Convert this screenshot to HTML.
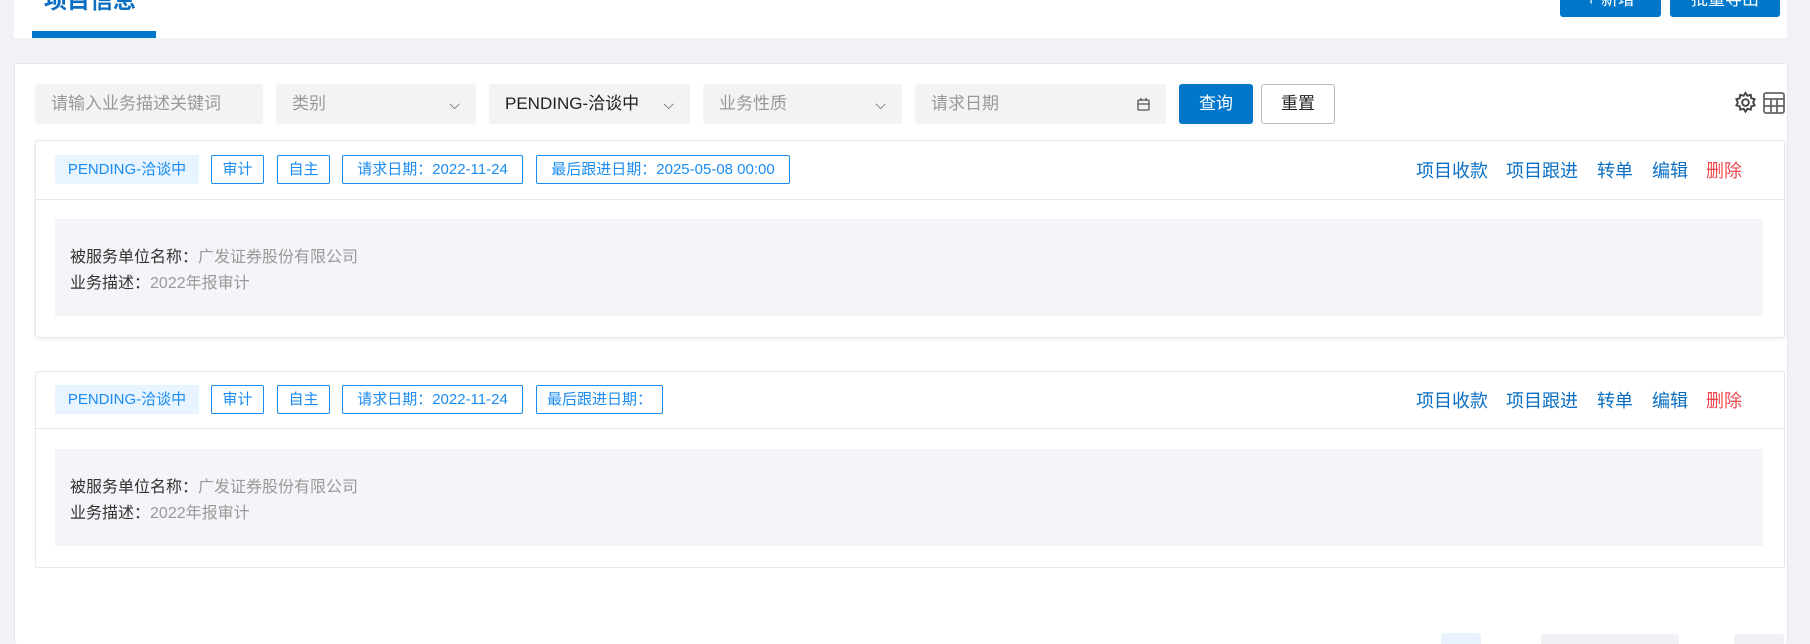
<!DOCTYPE html>
<html style="overflow:hidden;height:644px"><head><meta charset="utf-8"><style>
*{box-sizing:border-box;margin:0;padding:0}
body{width:1810px;height:644px;background:#f0f2f5;font-family:"Liberation Sans","Noto Sans CJK SC",sans-serif;position:relative;overflow:hidden}
.abs{position:absolute}
.hdr{left:14px;top:0;width:1773px;height:38px;background:#fff}
.btn{background:#0177cc;color:#fff;border-radius:3px;font-size:17px;text-align:center}
.main{left:14px;top:63px;width:1774px;height:581px;background:#fff;border:1px solid #e4e7ed;border-bottom:none;border-radius:3px}
.f{top:84px;height:40px;background:#f2f3f5;border-radius:3px;font-size:17px;color:#999;line-height:40px;padding-left:16px}
.f .ch{position:absolute;right:16px;top:0;color:#555;font-size:14px}
.card{left:35px;width:1750px;border:1px solid #e4e7ed;border-radius:3px;background:#fff}
.tag{height:29px;line-height:27px;border:1px solid #1a8cf0;color:#1a8cf0;font-size:15px;text-align:center;border-radius:2px;background:#fff}
.tag.s{border-color:#e8f4ff;background:#e8f4ff}
.act{font-size:18px;color:#0a6fc2}
.body{background:#f4f5f8;font-size:16px;color:#333;line-height:26px;padding-left:15px}
.body span{color:#999}
</style></head><body>
<div class="abs hdr"></div>
<div class="abs" style="left:44px;top:-19px;font-size:23px;font-weight:bold;color:#0a6fc2">项目信息</div>
<div class="abs" style="left:32px;top:31px;width:124px;height:7px;background:#0177cc"></div>
<div class="abs btn" style="left:1560px;top:-8px;width:101px;height:25px;line-height:16px">+ 新增</div>
<div class="abs btn" style="left:1670px;top:-8px;width:110px;height:25px;line-height:16px">批量导出</div>
<div class="abs main"></div>
<div class="abs f" style="left:35px;width:228px">请输入业务描述关键词</div>
<div class="abs f" style="left:276px;width:200px">类别<span class="ch">⌵</span></div>
<div class="abs f" style="left:489px;width:201px;color:#222">PENDING-洽谈中<span class="ch">⌵</span></div>
<div class="abs f" style="left:703px;width:199px">业务性质<span class="ch">⌵</span></div>
<div class="abs f" style="left:915px;width:251px">请求日期
<svg class="abs" style="right:16px;top:14px" width="13" height="13" viewBox="0 0 13 13" fill="none" stroke="#555" stroke-width="1.3"><rect x="1" y="2" width="11" height="10" rx="1"/><path d="M1 6h11M4 0v3M9 0v3"/></svg></div>
<div class="abs btn" style="left:1179px;top:84px;width:74px;height:40px;line-height:40px">查询</div>
<div class="abs" style="left:1261px;top:84px;width:74px;height:40px;line-height:38px;border:1px solid #bbb;border-radius:3px;text-align:center;font-size:17px;color:#222">重置</div>
<svg class="abs" style="left:1734px;top:91px" width="23" height="23" viewBox="0 0 24 24" fill="none" stroke="#444" stroke-width="2"><circle cx="12" cy="12" r="3.5"/><path d="M12 2l2 3 3.5-1 .5 3.5 3.5 1-1.5 3.5 1.5 3-3.5 1-.5 3.5-3.5-1-2 3-2-3-3.5 1-.5-3.5-3.5-1 1.5-3-1.5-3.5 3.5-1 .5-3.5 3.5 1z"/></svg>
<svg class="abs" style="left:1763px;top:92px" width="22" height="22" viewBox="0 0 22 22" fill="none" stroke="#666" stroke-width="1.8"><rect x="1" y="1" width="20" height="20" rx="2"/><path d="M1 7h20M1 14h20M8 7v14M14 7v14"/></svg>

<div class="abs card" style="top:140px;height:198px;box-shadow:0 1px 4px rgba(0,0,0,.08)"></div>
<div class="abs" style="left:36px;top:199px;width:1748px;height:1px;background:#e4e7ed"></div>
<div class="abs tag s" style="left:55px;top:155px;width:144px">PENDING-洽谈中</div>
<div class="abs tag" style="left:211px;top:155px;width:53px">审计</div>
<div class="abs tag" style="left:277px;top:155px;width:53px">自主</div>
<div class="abs tag" style="left:342px;top:155px;width:181px">请求日期：2022-11-24</div>
<div class="abs tag" style="left:536px;top:155px;width:254px">最后跟进日期：2025-05-08 00:00</div>
<div class="abs act" style="left:1416px;top:157px">项目收款</div>
<div class="abs act" style="left:1506px;top:157px">项目跟进</div>
<div class="abs act" style="left:1597px;top:157px">转单</div>
<div class="abs act" style="left:1652px;top:157px">编辑</div>
<div class="abs act" style="left:1706px;top:157px;color:#f0454a">删除</div>
<div class="abs body" style="left:55px;top:219px;width:1708px;height:97px;padding-top:26px">被服务单位名称：<span>广发证券股份有限公司</span><br>业务描述：<span>2022年报审计</span></div>

<div class="abs card" style="top:371px;height:197px"></div>
<div class="abs" style="left:36px;top:428px;width:1748px;height:1px;background:#e4e7ed"></div>
<div class="abs tag s" style="left:55px;top:385px;width:144px">PENDING-洽谈中</div>
<div class="abs tag" style="left:211px;top:385px;width:53px">审计</div>
<div class="abs tag" style="left:277px;top:385px;width:53px">自主</div>
<div class="abs tag" style="left:342px;top:385px;width:181px">请求日期：2022-11-24</div>
<div class="abs tag" style="left:536px;top:385px;width:127px">最后跟进日期：</div>
<div class="abs act" style="left:1416px;top:387px">项目收款</div>
<div class="abs act" style="left:1506px;top:387px">项目跟进</div>
<div class="abs act" style="left:1597px;top:387px">转单</div>
<div class="abs act" style="left:1652px;top:387px">编辑</div>
<div class="abs act" style="left:1706px;top:387px;color:#f0454a">删除</div>
<div class="abs body" style="left:55px;top:449px;width:1708px;height:97px;padding-top:26px">被服务单位名称：<span>广发证券股份有限公司</span><br>业务描述：<span>2022年报审计</span></div>

<div class="abs" style="left:1441px;top:633px;width:40px;height:11px;background:#e8f2fe;border-radius:3px 3px 0 0"></div>
<div class="abs" style="left:1541px;top:634px;width:138px;height:10px;background:#f0f1f4;border-radius:3px 3px 0 0"></div>
<div class="abs" style="left:1734px;top:634px;width:50px;height:10px;background:#f0f1f4;border-radius:3px 3px 0 0"></div>
</body></html>
